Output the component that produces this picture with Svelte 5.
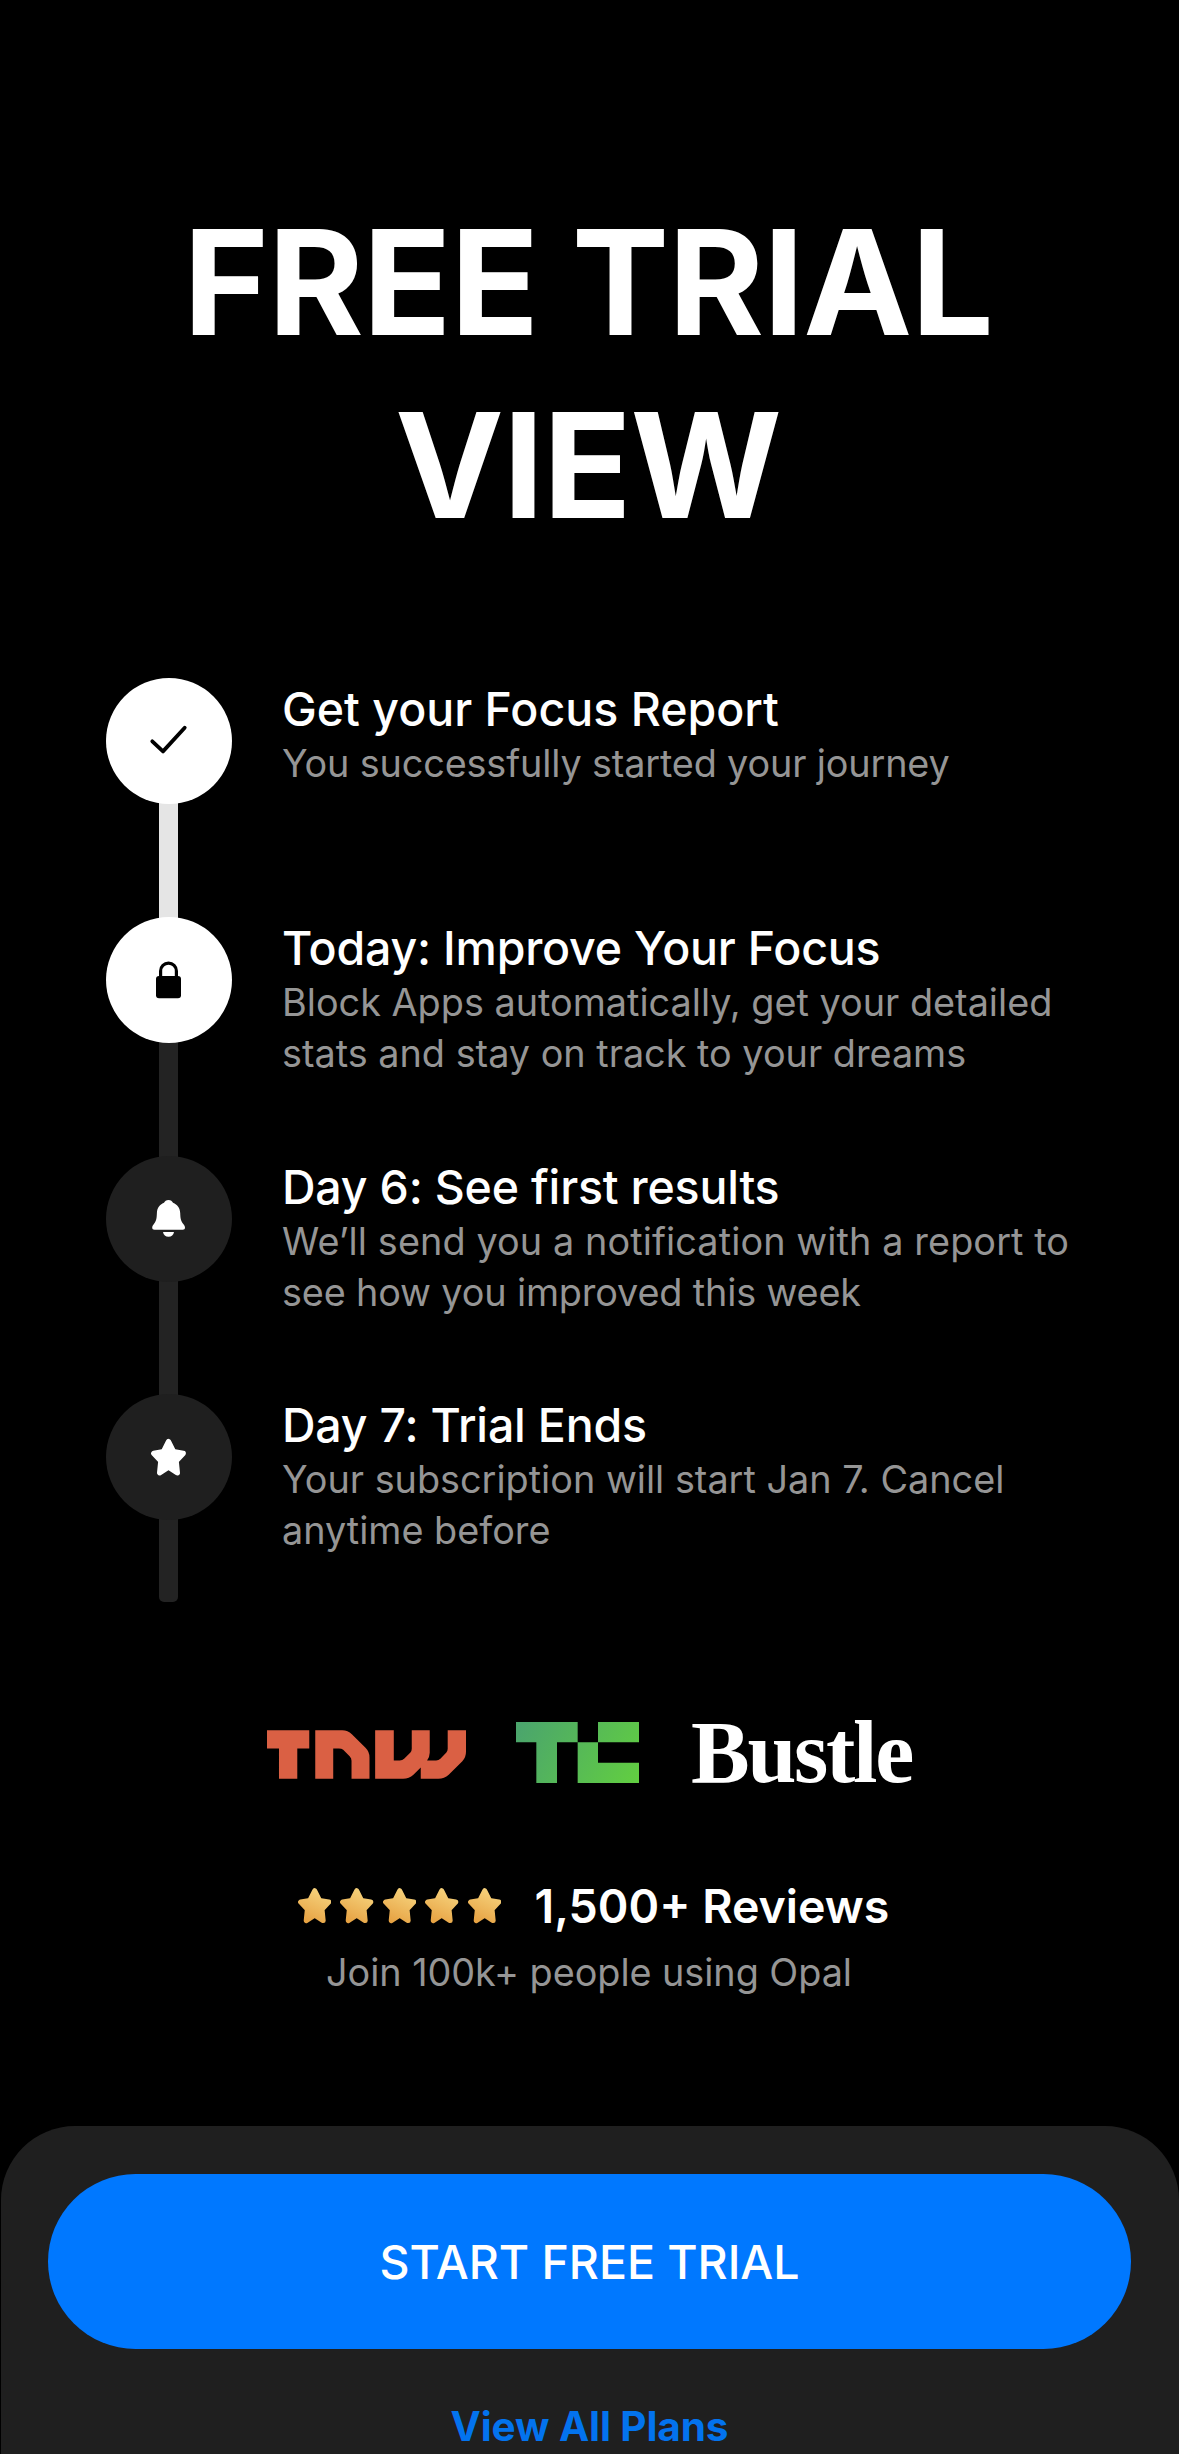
<script>
  const steps = [
    { icon: 'check', done: true, bar: 'light', title: 'Get your Focus Report', lines: ['You successfully started your journey'] },
    { icon: 'lock', done: true, bar: 'dark', title: 'Today: Improve Your Focus', lines: ['Block Apps automatically, get your detailed', 'stats and stay on track to your dreams'] },
    { icon: 'bell', done: false, bar: 'dark', title: 'Day 6: See first results', lines: ['We’ll send you a notification with a report to', 'see how you improved this week'] },
    { icon: 'star', done: false, bar: 'dark', title: 'Day 7: Trial Ends', lines: ['Your subscription will start Jan 7. Cancel', 'anytime before'] }
  ];
  const starPath = 'M62.5 47.600L67.500 57.700L77.200 59.400L70.100 67L71.300 78.700L62.500 72.900L53.700 78.700L54.900 67L47.800 59.400L57.500 57.700Z';
</script>

<main class="screen">
  <h1>FREE TRIAL<br />VIEW</h1>

  <ol class="steps">
    {#each steps as step}
      <li class="step">
        <div class="rail">
          <div class="dot" class:done={step.done}>
            <svg viewBox="0 0 126 126">
              {#if step.icon === 'check'}
                <path d="M46.3 63.3L57 73.4L78.7 49.7" fill="none" stroke="#000" stroke-width="3.8" stroke-linecap="round" stroke-linejoin="round" />
              {:else if step.icon === 'lock'}
                <rect x="50" y="59" width="25" height="22.3" rx="3" fill="#000" />
                <path d="M54.6 61V54a7.9 7.9 0 0 1 15.8 0V61" fill="none" stroke="#000" stroke-width="3.2" />
              {:else if step.icon === 'bell'}
                <path d="M62.5 44C64.8 44 66.2 45.2 67 46.8C71.5 48.6 74 52 74.2 57C74.4 62 74.6 65 77.5 68.3C78.6 69.6 79 70.7 79 71.7C79 73 78.200 73.700 76.800 73.700H48.500C47 73.700 46.200 73 46.200 71.700C46.200 70.700 46.600 69.600 47.700 68.300C50.500 65 50.700 62 50.900 57C51.100 52 53.500 48.600 58 46.800C58.800 45.200 60.200 44 62.500 44Z" fill="#fff" />
                <path d="M57 76H68C67.500 79 65.500 80.800 62.500 80.800S57.500 79 57 76Z" fill="#fff" />
              {:else}
                <path d={starPath} fill="#fff" stroke="#fff" stroke-width="5.4" stroke-linejoin="round" />
              {/if}
            </svg>
          </div>
          <div class="bar {step.bar}"></div>
        </div>
        <div class="copy">
          <h2>{step.title}</h2>
          <p>{#each step.lines as line}<span>{line}</span>{/each}</p>
        </div>
      </li>
    {/each}
  </ol>

  <section class="press">
    <svg class="tnw" viewBox="0 0 598 146" aria-label="TNW">
      <path fill="#da6044" d="M0 0H127V55H91V146H36V55H0ZM145 146V0H226Q243 0 255 12L296 53Q308 65 308 82V146H254V92Q254 84 249 79L229 59Q224 55 216 55H199V146ZM325 0H381V91H399Q407 91 412 86L431 67Q435 63 435 56V0H489V68Q489 80 481 91H508Q516 91 521 86L539 67Q543 62 543 56V0H598V65Q598 82 587 93L546 134Q533 146 515 146H462V112L440 134Q427 146 409 146H325Z" />
    </svg>
    <svg class="tc" viewBox="0 0 369 183" aria-label="TechCrunch">
      <defs>
        <linearGradient id="tc" gradientUnits="userSpaceOnUse" x1="20" y1="0" x2="350" y2="183">
          <stop offset="0" stop-color="#4ba56c" />
          <stop offset="1" stop-color="#61cd42" />
        </linearGradient>
      </defs>
      <path fill="url(#tc)" d="M0 0H185V61H123V183H61V61H0ZM246 0H369V61H246ZM185 61H246V122H369V183H185Z" />
    </svg>
    <span class="bustle">Bustle</span>
  </section>

  <section class="reviews">
    <div class="rating">
      <div class="stars">
        {#each Array(5) as _, i}
          <svg viewBox="45 44.7 35 37" preserveAspectRatio="none">
            <defs>
              <linearGradient id="gold{i}" gradientUnits="userSpaceOnUse" x1="68" y1="46" x2="52" y2="81">
                <stop offset="0" stop-color="#f6d27c" />
                <stop offset="1" stop-color="#e6a040" />
              </linearGradient>
            </defs>
            <path d={starPath} fill="url(#gold{i})" stroke="url(#gold{i})" stroke-width="5.400" stroke-linejoin="round" />
          </svg>
        {/each}
      </div>
      <strong>1,500+ Reviews</strong>
    </div>
    <p>Join 100k+ people using Opal</p>
  </section>

  <footer class="sheet">
    <button class="cta">START FREE TRIAL</button>
    <a class="plans" href="#plans">View All Plans</a>
  </footer>
</main>

<style>
  :global(body) {
    background: #000;
  }
  .screen {
    box-sizing: border-box;
    width: 1179px;
    height: 2454px;
    padding-top: 191px;
    overflow: hidden;
    display: flex;
    flex-direction: column;
    background: #000;
    color: #fff;
    font-family: Inter, 'Liberation Sans', sans-serif;
    white-space: nowrap;
  }
  h1,
  h2,
  p,
  ol {
    margin: 0;
    padding: 0;
  }
  h1 {
    padding-right: 3px;
    font-size: 146px;
    line-height: 183px;
    font-weight: 700;
    letter-spacing: -1px;
    text-align: center;
  }
  .steps {
    list-style: none;
    margin: 121px 0 0 106px;
  }
  .step {
    display: flex;
    gap: 50px;
    height: 239px;
  }
  .step:nth-child(3) {
    height: 238px;
  }
  .step:last-child {
    height: 208px;
  }
  .rail {
    width: 126px;
    display: flex;
    flex-direction: column;
    align-items: center;
  }
  .dot {
    width: 126px;
    height: 126px;
    flex: none;
    border-radius: 50%;
    background: #1f1f1f;
    z-index: 1;
  }
  .dot.done {
    background: #fff;
  }
  .dot svg {
    display: block;
  }
  .bar {
    width: 19px;
    flex: 1;
    margin: -1px 1px -1px 0;
    background: #232323;
  }
  .bar.light {
    background: #e5e5e5;
  }
  .step:last-child .bar {
    margin-bottom: 0;
    border-radius: 0 0 5px 5px;
  }
  .copy {
    padding-top: 6px;
  }
  h2 {
    font-size: 46.5px;
    line-height: 50px;
    font-weight: 500;
    letter-spacing: -0.2px;
  }
  .step:first-child h2 {
    letter-spacing: 0;
  }
  .copy p {
    margin-top: 3.5px;
    font-size: 37.8px;
    line-height: 51px;
    letter-spacing: 0;
    color: #959595;
  }
  .step:first-child p,
  .step:nth-child(3) span:last-child {
    letter-spacing: -0.15px;
  }
  .step:nth-child(3) span:first-child {
    letter-spacing: 0.1px;
  }
  .copy span {
    display: block;
  }
  .press {
    margin: 120px 0 0 267px;
    height: 61px;
    display: flex;
    align-items: flex-start;
  }
  .tnw {
    width: 199px;
    height: 49px;
    margin-top: 8px;
  }
  .tc {
    width: 123px;
    height: 61px;
    margin-left: 50px;
  }
  .bustle {
    margin-left: 52px;
    font-family: 'Liberation Serif', serif;
    font-weight: 700;
    font-size: 88px;
    line-height: 61px;
    letter-spacing: -2.3px;
  }
  .reviews {
    margin-top: 95px;
  }
  .rating {
    display: flex;
    align-items: center;
    height: 56px;
    padding-left: 298px;
  }
  .stars {
    display: flex;
    gap: 9px;
    width: 236.5px;
  }
  .stars svg {
    width: 33.4px;
    height: 35.4px;
  }
  strong {
    font-size: 46.5px;
    line-height: 56px;
    font-weight: 600;
  }
  .reviews p {
    margin-top: 13px;
    padding-right: 1px;
    font-size: 37.8px;
    line-height: 50px;
    letter-spacing: -0.05px;
    text-align: center;
    color: #959595;
  }
  .sheet {
    box-sizing: border-box;
    margin: 129px 0 0 1px;
    flex: 1;
    padding: 48px 48px 0 47px;
    display: flex;
    flex-direction: column;
    align-items: center;
    border-radius: 74px 74px 0 0;
    background: #1f1f1f;
  }
  .cta {
    width: 1083px;
    height: 175px;
    flex: none;
    border: 0;
    padding: 0;
    border-radius: 88px;
    background: #0078ff;
    color: #fff;
    font: 500 46.5px/56px Inter, 'Liberation Sans', sans-serif;
    letter-spacing: -0.05px;
  }
  .plans {
    margin-top: 53px;
    font-size: 40.5px;
    line-height: 50px;
    font-weight: 700;
    letter-spacing: -0.1px;
    color: #0373ee;
    text-decoration: none;
  }
</style>
